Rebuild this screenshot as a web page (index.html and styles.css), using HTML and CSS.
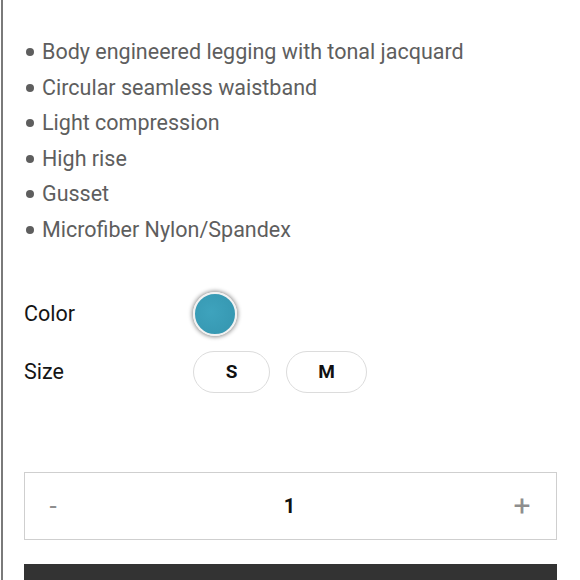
FILE: index.html
```html
<!DOCTYPE html>
<html>
<head>
<meta charset="utf-8">
<link rel="stylesheet" href="styles.css">
</head>
<body>
<div class="page">
  <ul class="features">
    <li>Body engineered legging with tonal jacquard</li>
    <li>Circular seamless waistband</li>
    <li>Light compression</li>
    <li>High rise</li>
    <li>Gusset</li>
    <li>Microfiber Nylon/Spandex</li>
  </ul>
  <div class="option color-row">
    <span class="label">Color</span>
    <span class="swatch"></span>
  </div>
  <div class="option size-row">
    <span class="label">Size</span>
    <div class="sizes">
      <span class="pill pill-s">S</span>
      <span class="pill pill-m">M</span>
    </div>
  </div>
  <div class="qty">
    <span class="qty-btn minus">-</span>
    <span class="qty-val">1</span>
    <span class="qty-btn plus">+</span>
  </div>
  <div class="cart-bar"></div>
</div>
</body>
</html>
```

FILE: styles.css
```css
html, body {
  margin: 0;
  padding: 0;
  background: #fff;
  height: 580px;
  overflow: hidden;
}
.page {
  margin-left: 1px;
  border-left: 2px solid #7a7a7a;
  padding: 34px 23px 0 21px;
  height: 580px;
  box-sizing: border-box;
  font-family: Roboto, "Liberation Sans", sans-serif;
}
.features {
  list-style: none;
  margin: 0;
  padding: 0;
}
.features li {
  font-size: 21.5px;
  line-height: 35.6px;
  color: #5e5e5e;
  white-space: nowrap;
}
.features li::before {
  content: "";
  display: inline-block;
  width: 8px;
  height: 8px;
  border-radius: 50%;
  background: #5e5e5e;
  margin: 0 8px 0 2px;
  vertical-align: 3px;
}
.option {
  display: flex;
  align-items: center;
}
.label {
  width: 169px;
  font-size: 21.5px;
  color: #151515;
}
.color-row {
  margin-top: 44px;
  height: 44px;
}
.swatch {
  width: 40px;
  height: 40px;
  border-radius: 50%;
  background: radial-gradient(circle at 40% 45%, #3ea3bd 0%, #3799b3 70%, #3592ab 100%);
  border: 2px solid #f2f2f2;
  box-shadow: 0 0 4px 1px rgba(0, 0, 0, 0.45);
}
.size-row {
  margin-top: 15px;
  height: 42px;
}
.sizes {
  display: flex;
  gap: 16px;
}
.pill {
  height: 40px;
  border: 1px solid #dcdcdc;
  border-radius: 21px;
  display: flex;
  align-items: center;
  justify-content: center;
  font-weight: bold;
  font-size: 19px;
  color: #111;
}
.pill-s { width: 75px; }
.pill-m { width: 79px; }
.qty {
  margin-top: 79px;
  height: 68px;
  border: 1px solid #cfcfcf;
  box-sizing: border-box;
  display: flex;
  align-items: center;
  justify-content: space-between;
  padding: 0 24px 0 18px;
}
.qty-btn {
  color: #8e8e8e;
  font-size: 30px;
  font-weight: normal;
  width: 20px;
  text-align: center;
}
.minus {
  font-size: 26px;
}
.qty-val {
  font-size: 20px;
  font-weight: bold;
  color: #111;
  margin-left: 4px;
}
.cart-bar {
  margin-top: 24px;
  height: 40px;
  background: #333;
}
```
